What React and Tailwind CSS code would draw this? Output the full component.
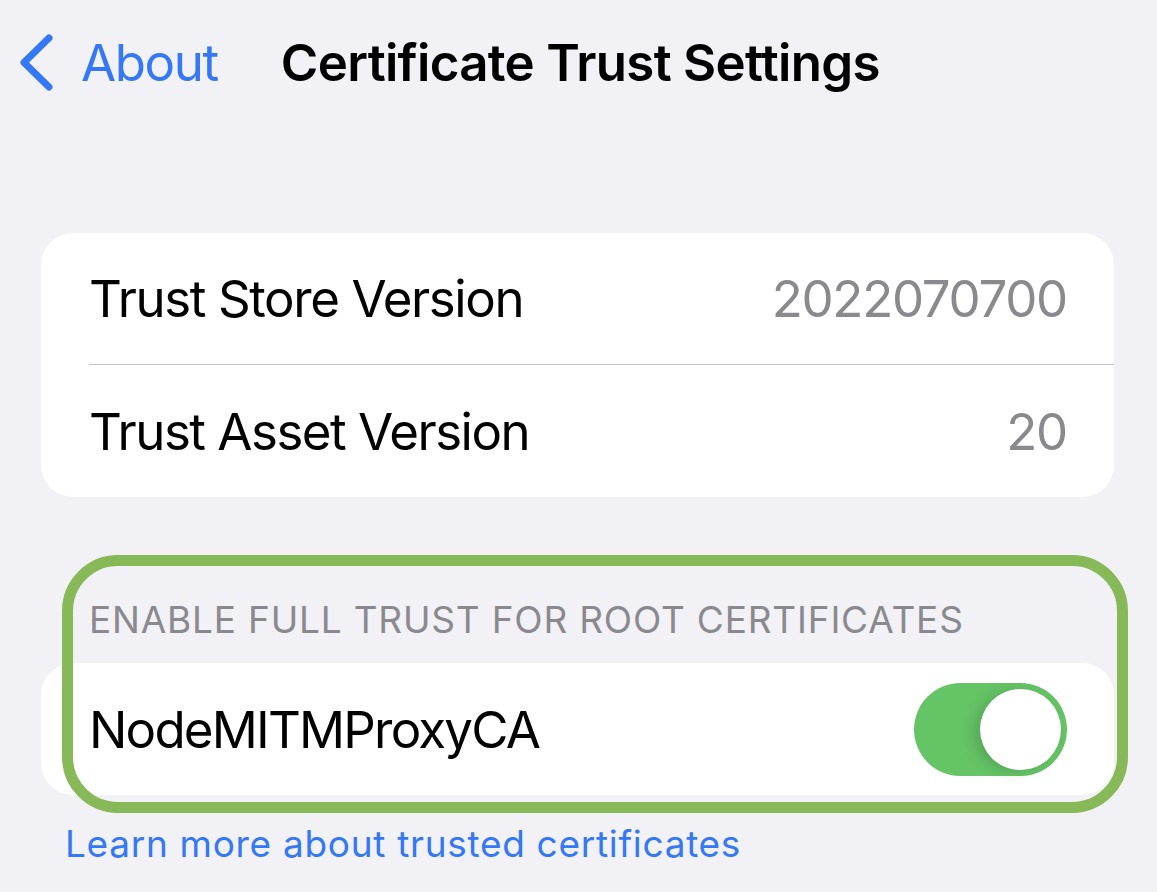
import React from "react";

export default function App() {
  return (
    <div className="min-h-screen w-full bg-[#f1f1f6] font-['Inter','Noto_Sans',sans-serif] text-black">
      {/* Nav bar */}
      <nav className="h-[124px] flex items-center">
        <svg width="38" height="60" viewBox="0 0 38 60" className="ml-[17px] shrink-0">
          <path d="M32 6 L7 30.5 L32 55" fill="none" stroke="#3478f6" strokeWidth="7" strokeLinecap="round" strokeLinejoin="round" />
        </svg>
        <span className="ml-[26px] text-[51px] leading-none text-[#3478f6] tracking-[-1.4px]">About</span>
        <span className="ml-[63px] text-[51px] leading-none font-semibold tracking-[-0.7px]">Certificate Trust Settings</span>
      </nav>

      <div className="pl-[41px] pr-[43px]">
        {/* Card 1 */}
        <div className="mt-[109px] bg-white rounded-[32px]">
          <div className="h-[131px] flex items-center justify-between pl-[48px] pr-[47px]">
            <span className="text-[51px] leading-none tracking-[-1.4px]">Trust Store Version</span>
            <span className="text-[51px] leading-none text-[#8a8a8e] tracking-[-1.3px]">2022070700</span>
          </div>
          <div className="ml-[48px] h-px bg-[#c6c6c8]" />
          <div className="h-[132px] flex items-center justify-between pl-[48px] pr-[47px]">
            <span className="text-[51px] leading-none tracking-[-1.5px]">Trust Asset Version</span>
            <span className="text-[51px] leading-none text-[#8a8a8e] tracking-[-1.3px]">20</span>
          </div>
        </div>
      </div>

      {/* Section 2 */}
      <div className="relative">
        <div className="pl-[41px] pr-[43px]">
          <div className="pt-[99px] pb-[19px] pl-[48px] text-[37px] leading-[48px] text-[#8a8a8e] uppercase tracking-[0.8px]">
            Enable Full Trust for Root Certificates
          </div>
          <div className="bg-white rounded-[32px] h-[132px] flex items-center justify-between pl-[48px] pr-[47px]">
            <span className="text-[51px] leading-none tracking-[-1.8px]">NodeMITMProxyCA</span>
            <div className="w-[153px] h-[93px] rounded-full bg-[#65c466] flex items-center justify-end pr-[6px]">
              <div className="w-[81px] h-[81px] rounded-full bg-white shadow-[-6px_2px_14px_rgba(0,0,0,0.15)]" />
            </div>
          </div>
        </div>
        {/* Highlight outline */}
        <div className="absolute left-[62px] right-[29px] top-[58px] h-[258px] rounded-[56px] border-[11px] border-[#88b958] pointer-events-none" />
        <div className="pt-[27px] pl-[65px] text-[37px] leading-[44px] text-[#3478f6] tracking-[0.7px]">
          Learn more about trusted certificates
        </div>
      </div>
    </div>
  );
}
